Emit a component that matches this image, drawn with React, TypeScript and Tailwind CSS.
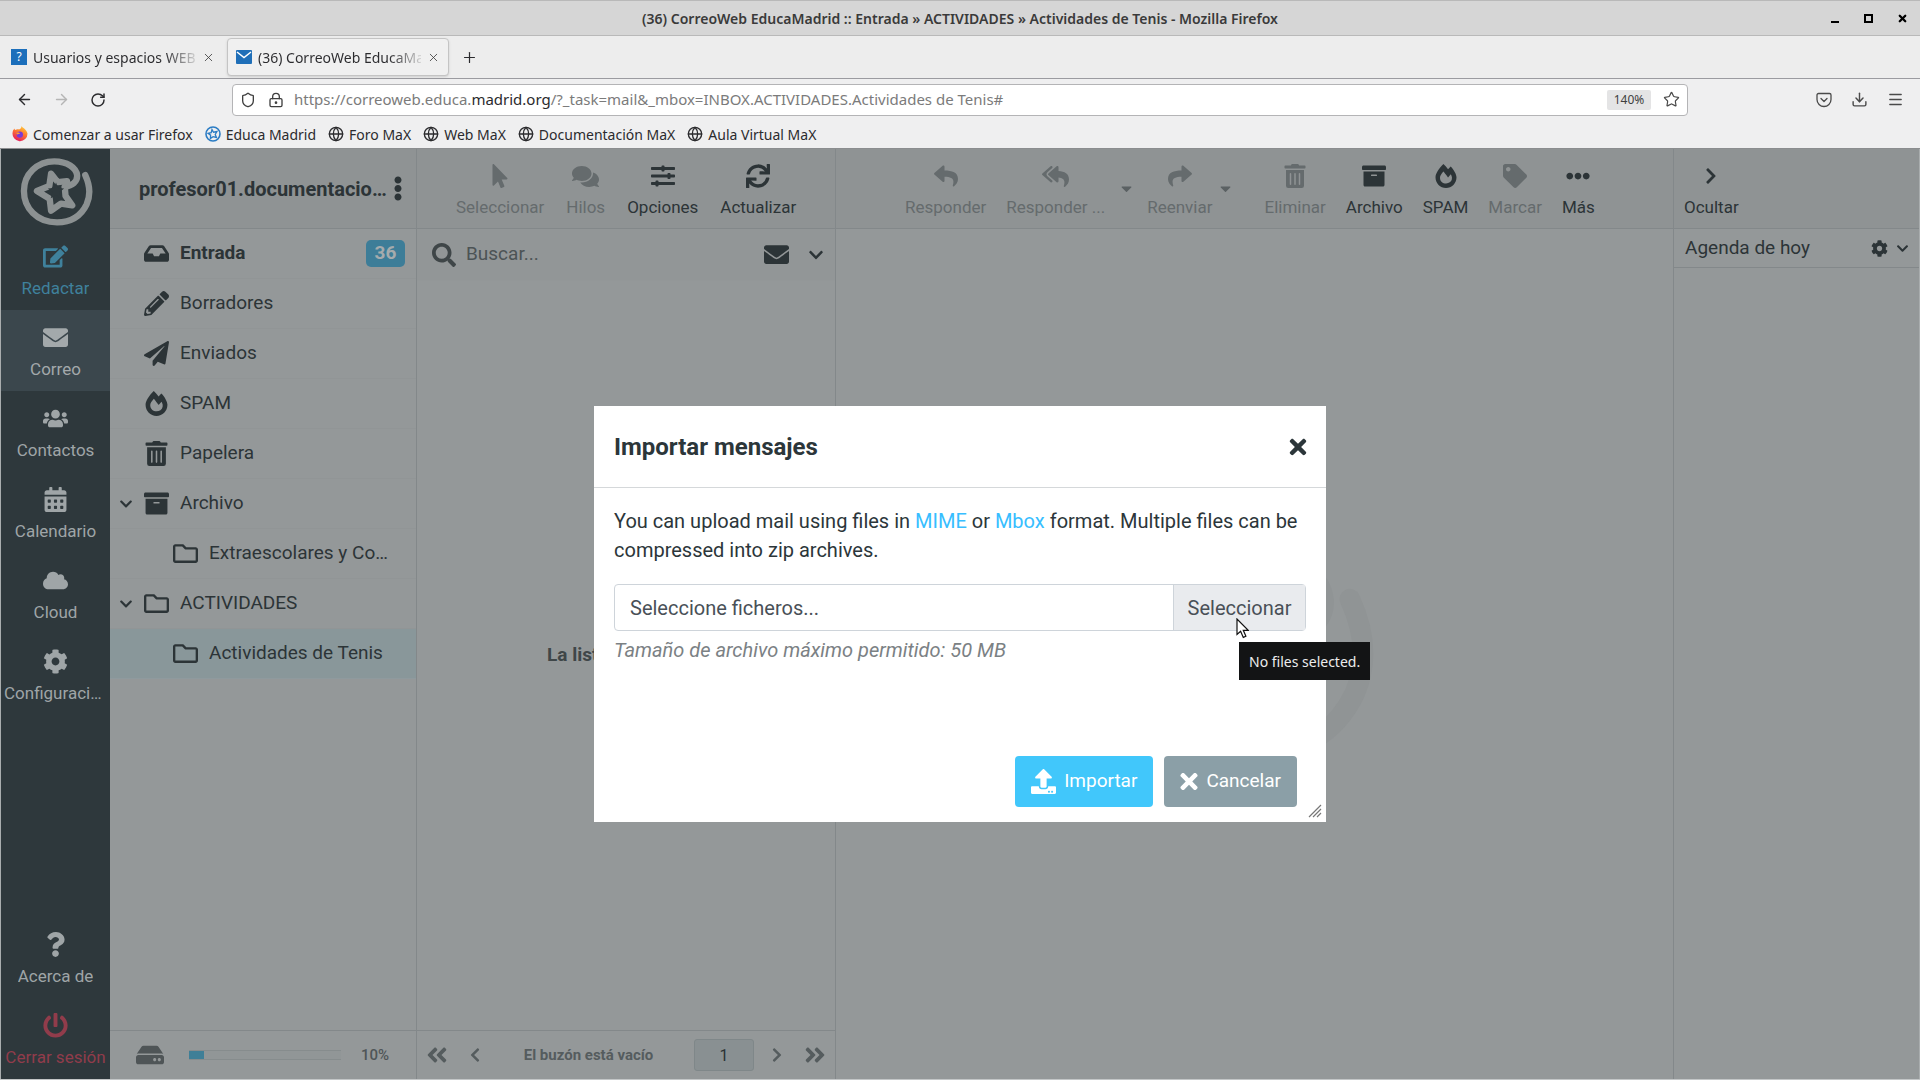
import type { ReactNode } from "react";
import type { IconType } from "react-icons";
import {
  FaAngleDoubleLeft,
  FaArchive,
  FaCalendarAlt,
  FaCaretDown,
  FaChevronDown,
  FaCloud,
  FaCog,
  FaComments,
  FaEdit,
  FaEllipsisH,
  FaEllipsisV,
  FaEnvelope,
  FaFireAlt,
  FaHdd,
  FaInbox,
  FaMousePointer,
  FaPaperPlane,
  FaPencilAlt,
  FaPowerOff,
  FaQuestion,
  FaRegFolder,
  FaReply,
  FaReplyAll,
  FaSearch,
  FaShare,
  FaSlidersH,
  FaSync,
  FaTag,
  FaTimes,
  FaTrashAlt,
  FaUpload,
  FaUsers,
  FaAngleDoubleRight,
  FaChevronLeft,
  FaChevronRight,
} from "react-icons/fa";
import { ArrowLeft, ArrowRight, Download, Globe, LockKeyhole, Menu, Plus, RotateCw, Shield, Star, X } from "lucide-react";
import clsx from "clsx";

const chromeFont = "font-['Noto_Sans',sans-serif]";

/* ---------- browser chrome ---------- */

function Tab({ icon, title, active }: { icon: ReactNode; title: string; active?: boolean }) {
  return (
    <div
      className={clsx(
        "flex h-[38px] w-[222px] items-center gap-[6px] rounded-[4px]",
        active ? "border border-[#c4c4c4] bg-[#f0f0f0] px-2 shadow-sm" : "pr-3 pl-[6px]",
      )}
    >
      {icon}
      <button className="min-w-0 flex-1 overflow-hidden whitespace-nowrap bg-linear-to-r from-[#2b2b2e] from-80% to-[#d4d4d4] bg-clip-text text-left text-transparent">
        {title}
      </button>
      <button aria-label="Cerrar pestaña" className="text-[#3a3a3a]">
        <X size={13} strokeWidth={1.5} />
      </button>
    </div>
  );
}

function FirefoxIcon() {
  return (
    <svg width="16" height="16" viewBox="0 0 16 16">
      <defs>
        <linearGradient id="flame" x1="0.8" y1="0" x2="0.3" y2="1">
          <stop offset="0" stopColor="#ffd43a" />
          <stop offset="0.45" stopColor="#ff7a2e" />
          <stop offset="1" stopColor="#e3175f" />
        </linearGradient>
      </defs>
      <path
        d="M9.5 0c1 2 5 3 6 7.5A7.5 7.5 0 1 1 .6 6.5C.7 5 1.4 3.6 2.5 2.5c0 .7.3 1.2.8 1.6C5 2.9 6.5 3.500 7 3.6 8.5 3 9.5 2 9.5 0z"
        fill="url(#flame)"
      />
      <circle cx="7.8" cy="8.6" r="3.2" fill="#7a3ad6" />
      <path d="M4.5 7c1.5-.8 3-.2 3.6.6-1.2 0-1.6.8-3.2 1z" fill="#ff9a35" />
    </svg>
  );
}

function EducaIcon() {
  return (
    <svg width="16" height="16" viewBox="0 0 16 16" fill="none" stroke="#2b7cc4">
      <circle cx="8" cy="8" r="7" strokeWidth="1.6" />
      <path d="M7 3.5l1.5 2.7 3.5-.7-1.8 3 1.3 3-3.4-.9-2.7 1.8.2-3.2L3 7.4l3.2-.8z" strokeWidth="1.3" />
    </svg>
  );
}

function Pocket() {
  return (
    <svg width="16" height="16" viewBox="0 0 16 16" fill="none" stroke="currentColor" strokeLinecap="round" strokeLinejoin="round">
      <path d="M2.5 1.5h11a1.5 1.5 0 0 1 1.5 1.5v4.5a7 7 0 0 1-14 0V3a1.5 1.5 0 0 1 1.5-1.5z" strokeWidth="1.3" />
      <path d="M5 6.5l3 3 3-3" strokeWidth="1.3" />
    </svg>
  );
}

const bookmarks = [
  { label: "Comenzar a usar Firefox", icon: <FirefoxIcon /> },
  { label: "Educa Madrid", icon: <EducaIcon /> },
  { label: "Foro MaX", icon: <Globe size={16} strokeWidth={2} /> },
  { label: "Web MaX", icon: <Globe size={16} strokeWidth={2} /> },
  { label: "Documentación MaX", icon: <Globe size={16} strokeWidth={2} /> },
  { label: "Aula Virtual MaX", icon: <Globe size={16} strokeWidth={2} /> },
];

function BrowserChrome() {
  return (
    <header className={clsx("shrink-0 bg-[#efeff0] text-[14px] text-[#2b2b2e]", chromeFont)}>
      <div className="relative flex h-[36px] items-center justify-center border-y border-[#b9b9b9] bg-[#d6d6d6]">
        <h1 className="text-[14px] font-semibold text-[#3a3a3a]">
          (36) CorreoWeb EducaMadrid :: Entrada » ACTIVIDADES » Actividades de Tenis - Mozilla Firefox
        </h1>
        <div className="absolute right-3 flex items-center gap-6 text-black">
          <button aria-label="Minimizar" className="flex h-[9px] w-[9px] items-end">
            <span className="h-[2px] w-[8px] bg-black" />
          </button>
          <button aria-label="Maximizar" className="h-[9px] w-[9px] border-2 border-black" />
          <button aria-label="Cerrar ventana">
            <X size={11} strokeWidth={5} />
          </button>
        </div>
      </div>

      <div className="flex h-[43px] items-center border-b border-[#9b9ba0] bg-[#ededed] px-[5px]">
        <Tab
          title="Usuarios y espacios WEB"
          icon={<span className="flex h-4 w-4 shrink-0 items-center justify-center bg-[#1c6fbb] text-[12px] text-white">?</span>}
        />
        <Tab
          active
          title="(36) CorreoWeb EducaMadrid"
          icon={
            <svg className="shrink-0" width="16" height="14" viewBox="0 0 16 14">
              <rect width="16" height="14" rx="1" fill="#1f6fb8" />
              <path d="M1 2l7 5.5L15 2" fill="none" stroke="#fff" strokeWidth="1.5" />
            </svg>
          }
        />
        <button aria-label="Nueva pestaña" className="ml-3">
          <Plus size={17} strokeWidth={1.7} />
        </button>
      </div>

      <div className="flex h-[41px] items-center">
        <div className="flex w-[232px] items-center gap-[20px] pl-4">
          <button aria-label="Atrás">
            <ArrowLeft size={17} strokeWidth={2} />
          </button>
          <button aria-label="Adelante" className="text-[#b5b5b5]">
            <ArrowRight size={17} strokeWidth={2} />
          </button>
          <button aria-label="Recargar">
            <RotateCw size={16} strokeWidth={2.2} />
          </button>
        </div>
        <div className="flex h-8 flex-1 items-center rounded-[4px] border border-[#b4b4b6] bg-white px-[7px] text-[#7b7b7b]">
          <Shield size={16} strokeWidth={2} className="text-[#3f3f3f]" />
          <LockKeyhole size={16} strokeWidth={2} className="ml-3 text-[#3f3f3f]" />
          <p className="ml-[10px] flex-1 text-[15px] whitespace-nowrap">
            https://correoweb.educa.<span className="text-[#2b2b2e]">madrid.org</span>
            /?_task=mail&amp;_mbox=INBOX.ACTIVIDADES.Actividades de Tenis#
          </p>
          <button className="mr-3 h-5 w-[44px] rounded-[2px] bg-[#e4e4e5] text-[12px] text-[#3f3f3f]">140%</button>
          <button aria-label="Añadir a marcadores" className="text-[#4a4a4a]">
            <Star size={17} strokeWidth={1.7} />
          </button>
        </div>
        <div className="flex w-[232px] items-center justify-end gap-[19px] pr-4 text-[#4a4a4a]">
          <button aria-label="Pocket">
            <Pocket />
          </button>
          <button aria-label="Descargas">
            <Download size={17} strokeWidth={2} />
          </button>
          <button aria-label="Menú">
            <Menu size={17} strokeWidth={2} />
          </button>
        </div>
      </div>

      <nav className="flex h-[29px] items-center gap-3 border-b border-[#8b8d8f] px-3">
        {bookmarks.map((b) => (
          <a key={b.label} href="#" className="flex items-center gap-[5px] whitespace-nowrap">
            {b.icon}
            {b.label}
          </a>
        ))}
      </nav>
    </header>
  );
}

/* ---------- webmail ---------- */

function Logo({ className }: { className?: string }) {
  return (
    <svg className={className} viewBox="55 50 220 210" fill="none" stroke="currentColor" strokeLinecap="round" strokeLinejoin="round">
      <path
        d="M248 107c13 28 16 56 4 83-17 35-47 51-84 51-58 0-94-41-94-89S112 68 160 68c36 0 63 18 65 40 1 18-14 29-35 32"
        strokeWidth="18"
      />
      <path d="M190 142l2 24 19 27-32-5-28 20-4-34-36-22 35-14 5-35 19 24 26-3" strokeWidth="18" />
      <path
        d="M165 128l6 16 17 1-13 11 4 17-14-9-15 9 5-17-13-11 17-1z"
        className="fill-[#2e383c]"
        stroke="none"
      />
    </svg>
  );
}

function Watermark() {
  return (
    <svg className="h-[240px] w-[252px] text-[#909495]" viewBox="55 50 220 210" fill="none" stroke="currentColor" strokeLinecap="round">
      <path
        d="M248 107c13 28 16 56 4 83-17 35-47 51-84 51-58 0-94-41-94-89S112 68 160 68c36 0 63 18 65 40 1 18-14 29-35 32"
        strokeWidth="18"
      />
    </svg>
  );
}

type TaskItem = { label: string; icon: IconType; tone?: string };

function TaskButton({ label, icon: Icon, tone = "text-[#9fa5a7]" }: TaskItem) {
  return (
    <button className={clsx("flex h-[81px] w-full flex-col items-center gap-[7px] overflow-hidden px-[3px] pt-[15px] text-[17px] leading-6", tone)}>
      <Icon size={25} className="shrink-0" />
      <span className="max-w-full truncate">{label}</span>
    </button>
  );
}

const tasks: TaskItem[] = [
  { label: "Redactar", icon: FaEdit, tone: "text-[#3f819c]" },
  { label: "Correo", icon: FaEnvelope, tone: "bg-[#3b474d] text-[#a3a9ab]" },
  { label: "Contactos", icon: FaUsers },
  { label: "Calendario", icon: FaCalendarAlt },
  { label: "Cloud", icon: FaCloud },
  { label: "Configuración", icon: FaCog },
];

function TaskMenu() {
  return (
    <nav className="flex w-[110px] shrink-0 flex-col items-center border-l border-[#a9adae] bg-[#2e383c]">
      <Logo className="mt-[6px] h-[74px] w-[78px] text-[#8c9192]" />
      {tasks.map((t) => (
        <TaskButton key={t.label} {...t} />
      ))}
      <div className="mt-auto w-full">
        <TaskButton label="Acerca de" icon={FaQuestion} />
        <button className="flex h-[81px] w-full flex-col items-center gap-[7px] overflow-hidden pt-[15px] text-[17px] leading-6 text-[#913c4b]">
          <FaPowerOff size={25} className="shrink-0" />
          <span className="whitespace-nowrap">Cerrar sesión</span>
        </button>
      </div>
    </nav>
  );
}

type Folder = { name: string; icon: IconType; open?: boolean; child?: boolean; selected?: boolean; unread?: number };

const folders: Folder[] = [
  { name: "Entrada", icon: FaInbox, unread: 36 },
  { name: "Borradores", icon: FaPencilAlt },
  { name: "Enviados", icon: FaPaperPlane },
  { name: "SPAM", icon: FaFireAlt },
  { name: "Papelera", icon: FaTrashAlt },
  { name: "Archivo", icon: FaArchive, open: true },
  { name: "Extraescolares y Complementarias", icon: FaRegFolder, child: true },
  { name: "ACTIVIDADES", icon: FaRegFolder, open: true },
  { name: "Actividades de Tenis", icon: FaRegFolder, child: true, selected: true },
];

function FolderRow({ name, icon: Icon, open, child, selected, unread }: Folder) {
  return (
    <li
      className={clsx(
        "flex h-[50px] items-center border-b text-[19px]",
        selected ? "border-[#8f9a9e] bg-[#89979a]" : "border-[#919596]",
        child ? "pr-6 pl-[62px]" : "pr-[11px] pl-[9px]",
        unread && "font-bold",
      )}
    >
      {!child && (
        <span className="flex w-6 shrink-0 items-center">
          {open && (
            <button aria-label={`Plegar ${name}`}>
              <FaChevronDown size={14} />
            </button>
          )}
        </span>
      )}
      <a href="#" className="flex min-w-0 flex-1 items-center gap-[10px]">
        <span className="flex w-[27px] shrink-0 justify-center">
          <Icon size={25} />
        </span>
        <span className="truncate">{name}</span>
      </a>
      {unread && <span className="flex h-[27px] w-[39px] items-center justify-center rounded-[5px] bg-[#3d7d98] text-[#a5abad]">{unread}</span>}
    </li>
  );
}

function FolderPane() {
  return (
    <section className="flex w-[307px] shrink-0 flex-col border-r border-[#83888a]">
      <div className="flex h-[80px] shrink-0 items-center border-b border-[#83888a] bg-[#8f9394] pr-[10px] pl-[29px]">
        <h2 className="flex-1 truncate text-[20px] font-bold">profesor01.documentacionmax</h2>
        <button aria-label="Acciones de carpetas" className="flex w-4 justify-center">
          <FaEllipsisV size={25} />
        </button>
      </div>
      <ul className="flex-1">
        {folders.map((f) => (
          <FolderRow key={f.name} {...f} />
        ))}
      </ul>
      <div className="flex h-[49px] shrink-0 items-center border-t border-[#83888a] pr-[27px] pl-[26px] text-[15px] font-medium text-[#4f5557]">
        <FaHdd size={28} />
        <div className="ml-[25px] h-[10px] flex-1 border-y border-[#868c8d] bg-[#919697]">
          <div className="h-full w-[10%] bg-[#3f7f97]" />
        </div>
        <span className="ml-5">10%</span>
      </div>
    </section>
  );
}

function ToolButton({ label, icon: Icon, disabled, size = 24 }: { label: string; icon: IconType; disabled?: boolean; size?: number }) {
  return (
    <button
      disabled={disabled}
      className={clsx("flex flex-col items-center gap-[7px] px-[10px] text-[17px] leading-6 whitespace-nowrap", disabled && "text-[#656b6d]")}
    >
      <span className="flex h-6 items-center">
        <Icon size={size} />
      </span>
      {label}
    </button>
  );
}

function DropCaret({ label }: { label: string }) {
  return (
    <button disabled aria-label={label} className="flex w-[22px] justify-center pt-4 text-[#5b6163]">
      <FaCaretDown size={17} />
    </button>
  );
}

function ListPane() {
  return (
    <section className="flex w-[419px] shrink-0 flex-col border-r border-[#83888a]">
      <div className="flex h-[80px] shrink-0 items-start gap-[2px] border-b border-[#83888a] bg-[#8f9394] pt-[15px] pl-[29px]">
        <ToolButton label="Seleccionar" icon={FaMousePointer} disabled />
        <ToolButton label="Hilos" icon={FaComments} size={27} disabled />
        <ToolButton label="Opciones" icon={FaSlidersH} />
        <ToolButton label="Actualizar" icon={FaSync} />
      </div>
      <div className="flex h-[52px] shrink-0 items-center border-b border-[#939798] bg-[#929697] pr-[11px] pl-[15px]">
        <FaSearch size={24} className="shrink-0 text-[#3f4648]" />
        <input
          type="text"
          aria-label="Buscar"
          placeholder="Buscar..."
          className="ml-[10px] min-w-0 flex-1 bg-transparent text-[19px] placeholder:text-[#4c5355]"
        />
        <button aria-label="Mensajes no leídos">
          <FaEnvelope size={25} />
        </button>
        <button aria-label="Opciones de búsqueda" className="ml-[19px]">
          <FaChevronDown size={16} />
        </button>
      </div>
      <div className="flex flex-1 items-center justify-center text-[19px] font-bold text-[#3f4648]">La lista está vacía.</div>
      <div className="flex h-[49px] shrink-0 items-center border-t border-[#83888a] px-2 text-[#555c5e]">
        <button aria-label="Primera página">
          <FaAngleDoubleLeft size={24} />
        </button>
        <button aria-label="Página anterior" className="ml-[18px]">
          <FaChevronLeft size={16} />
        </button>
        <span className="flex-1 text-center text-[15px] font-bold">El buzón está vacío</span>
        <input
          type="text"
          aria-label="Página"
          defaultValue="1"
          className="h-8 w-[60px] rounded-[3px] border border-[#7f8789] bg-[#899092] text-center text-[16px] text-[#2b3235]"
        />
        <button aria-label="Página siguiente" className="ml-[15px]">
          <FaChevronRight size={16} />
        </button>
        <button aria-label="Última página" className="ml-[18px]">
          <FaAngleDoubleRight size={24} />
        </button>
      </div>
    </section>
  );
}

function ContentPane() {
  return (
    <section className="flex min-w-0 flex-1 flex-col border-r border-[#83888a]">
      <div className="flex h-[80px] shrink-0 items-start border-b border-[#83888a] bg-[#8f9394] pt-[15px] pl-[59px]">
        <ToolButton label="Responder" icon={FaReply} disabled />
        <ToolButton label="Responder ..." icon={FaReplyAll} size={27} disabled />
        <DropCaret label="Opciones de respuesta" />
        <ToolButton label="Reenviar" icon={FaShare} disabled />
        <div className="mr-[18px] -ml-2">
          <DropCaret label="Opciones de reenvío" />
        </div>
        <ToolButton label="Eliminar" icon={FaTrashAlt} disabled />
        <ToolButton label="Archivo" icon={FaArchive} />
        <ToolButton label="SPAM" icon={FaFireAlt} />
        <ToolButton label="Marcar" icon={FaTag} disabled />
        <ToolButton label="Más" icon={FaEllipsisH} />
      </div>
      <div className="flex flex-1 items-center justify-center">
        <Watermark />
      </div>
    </section>
  );
}

function AgendaPane() {
  return (
    <aside className="flex w-[246px] shrink-0 flex-col border-r border-[#a9adae]">
      <div className="flex h-[80px] shrink-0 items-start border-b border-[#83888a] bg-[#8f9394] pt-[15px]">
        <ToolButton label="Ocultar" icon={FaChevronRight} size={18} />
      </div>
      <div className="flex h-[39px] shrink-0 items-center border-b border-[#83888a] pr-[10px] pl-[11px]">
        <h2 className="flex-1 text-[19px]">Agenda de hoy</h2>
        <button aria-label="Configurar agenda">
          <FaCog size={17} />
        </button>
        <button aria-label="Plegar agenda" className="ml-2">
          <FaChevronDown size={13} />
        </button>
      </div>
    </aside>
  );
}

function ImportDialog() {
  return (
    <div role="dialog" aria-labelledby="import-title" className="relative flex min-h-[416px] w-[732px] flex-col bg-white text-[#2c363a]">
      <div className="flex h-[82px] items-center border-b border-[#d5d8da] px-5">
        <h2 id="import-title" className="flex-1 text-[24px] font-bold">
          Importar mensajes
        </h2>
        <button aria-label="Cerrar">
          <FaTimes size={24} className="-mr-1" />
        </button>
      </div>
      <div className="flex-1 px-5 pt-[19px] text-[20px]">
        <p className="leading-[29px]">
          You can upload mail using files in{" "}
          <a href="#" className="text-[#37beff]">
            MIME
          </a>{" "}
          or{" "}
          <a href="#" className="text-[#37beff]">
            Mbox
          </a>{" "}
          format. Multiple files can be compressed into zip archives.
        </p>
        <div className="mt-[19px] flex h-[47px] rounded-[4px] border border-[#ced4da] text-[#495057]">
          <label htmlFor="import-file" className="flex flex-1 items-center px-[15px]">
            Seleccione ficheros...
          </label>
          <input id="import-file" type="file" multiple className="sr-only" />
          <button className="w-[132px] border-l border-[#ced4da] bg-[#e9ebee]">Seleccionar</button>
        </div>
        <p className="mt-[5px] leading-[29px] text-[#7b8184] italic">Tamaño de archivo máximo permitido: 50 MB</p>
      </div>
      <div className="flex justify-end gap-[11px] pr-[29px] pb-[15px] text-[19px] text-white">
        <button className="flex h-[51px] items-center gap-2 rounded-[4px] bg-[#41c7fb] px-4">
          <FaUpload size={25} />
          Importar
        </button>
        <button className="flex h-[51px] items-center gap-2 rounded-[4px] bg-[#8b9fa7] px-4">
          <FaTimes className="h-[25px] w-[18px]" />
          Cancelar
        </button>
      </div>
      <svg className="absolute right-1 bottom-1" width="14" height="14" viewBox="0 0 14 14" stroke="#777" strokeWidth="1.2">
        <path d="M1 13L13 1M5 13l8-8M9 13l4-4" />
      </svg>
      <svg className="absolute top-[212px] left-[642px]" width="13" height="21" viewBox="0 0 13 21">
        <path d="M1 1v15.5l3.6-3.3 2.7 6.2 2.6-1.2-2.6-5.9h4.9z" fill="#fff" stroke="#111" strokeWidth="1.2" />
      </svg>
      <div
        role="tooltip"
        className={clsx("absolute top-[236px] left-[645px] flex h-[38px] items-center bg-[#131415] px-[10px] text-[14px] whitespace-nowrap text-[#ededed]", chromeFont)}
      >
        No files selected.
      </div>
    </div>
  );
}

export default function App() {
  return (
    <div className="flex h-screen flex-col font-[Roboto,sans-serif]">
      <BrowserChrome />
      <main className="relative flex min-h-0 flex-1 border-b border-[#c3c6c7] bg-[#949899] text-[#2c3437]">
        <TaskMenu />
        <FolderPane />
        <ListPane />
        <ContentPane />
        <AgendaPane />
        <div className="absolute inset-0 flex items-center justify-center">
          <ImportDialog />
        </div>
      </main>
    </div>
  );
}
